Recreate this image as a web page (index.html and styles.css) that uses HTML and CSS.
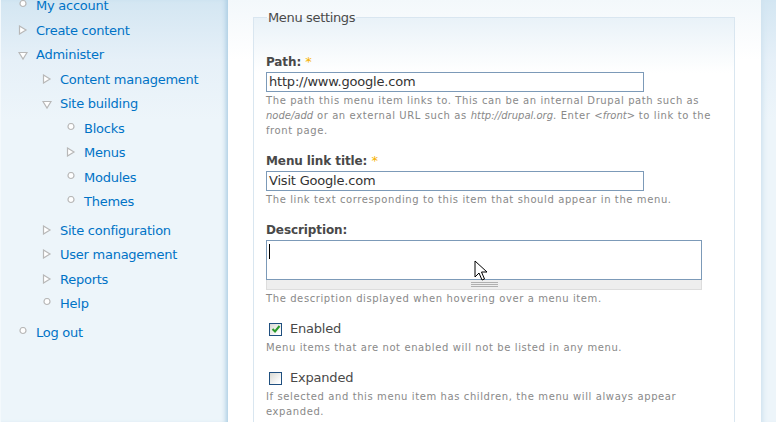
FILE: index.html
```html
<!DOCTYPE html>
<html lang="en">
<head>
    <meta charset="UTF-8">
    <title>Menu settings</title>
    <link rel="stylesheet" href="styles.css">
</head>
<body>
    <div class="sidebar">
        <ul class="menu">
            <li class="leaf"><a href="#">My account</a></li>
            <li class="collapsed"><a href="#">Create content</a></li>
            <li class="expanded"><a href="#">Administer</a>
                <ul class="menu">
                    <li class="collapsed"><a href="#">Content management</a></li>
                    <li class="expanded"><a href="#">Site building</a>
                        <ul class="menu">
                            <li class="leaf"><a href="#">Blocks</a></li>
                            <li class="collapsed"><a href="#">Menus</a></li>
                            <li class="leaf"><a href="#">Modules</a></li>
                            <li class="leaf"><a href="#">Themes</a></li>
                        </ul>
                    </li>
                    <li class="collapsed"><a href="#">Site configuration</a></li>
                    <li class="collapsed"><a href="#">User management</a></li>
                    <li class="collapsed"><a href="#">Reports</a></li>
                    <li class="leaf"><a href="#">Help</a></li>
                </ul>
            </li>
            <li class="leaf"><a href="#">Log out</a></li>
        </ul>
    </div>

    <div class="main">
        <fieldset class="settings">
            <legend>Menu settings</legend>

            <div class="form-item">
                <label>Path: <span class="required">*</span></label>
                <div class="text-field">http://www.google.com</div>
                <div class="description">The path this menu item links to. This can be an internal Drupal path such as <em>node/add</em> or an external URL such as <em>http://drupal.org</em>. Enter <em>&lt;front&gt;</em> to link to the front page.</div>
            </div>

            <div class="form-item">
                <label>Menu link title: <span class="required">*</span></label>
                <div class="text-field">Visit Google.com</div>
                <div class="description">The link text corresponding to this item that should appear in the menu.</div>
            </div>

            <div class="form-item">
                <label>Description:</label>
                <div class="textarea-wrap">
                    <div class="textarea"><span class="caret"></span></div>
                    <div class="grippie"></div>
                    <svg class="cursor" width="14" height="22" viewBox="0 0 14 22">
                        <path d="M1 1 L1 17 L5 13 L8 20 L10.5 19 L7.5 12 L13 12 Z" fill="#fff" stroke="#000" stroke-width="1"/>
                    </svg>
                </div>
                <div class="description">The description displayed when hovering over a menu item.</div>
            </div>

            <div class="form-item checkbox">
                <div class="check-row">
                    <span class="box checked">
                        <svg width="10" height="10" viewBox="0 0 10 10"><path d="M1.5 5 L4 7.5 L8.5 2" fill="none" stroke="#2a9a2a" stroke-width="2"/></svg>
                    </span>
                    <span class="check-label">Enabled</span>
                </div>
                <div class="description">Menu items that are not enabled will not be listed in any menu.</div>
            </div>

            <div class="form-item checkbox">
                <div class="check-row">
                    <span class="box"></span>
                    <span class="check-label">Expanded</span>
                </div>
                <div class="description">If selected and this menu item has children, the menu will always appear expanded.</div>
            </div>
        </fieldset>
    </div>

    <div class="right-edge"></div>
</body>
</html>
```

FILE: styles.css
```css
body, html {
    margin: 0;
    height: 100%;
    overflow: hidden;
}
body {
    display: flex;
    font-family: "DejaVu Sans", Verdana, sans-serif;
    background-color: #edf5fa;
}
.sidebar {
    width: 227px;
    flex-shrink: 0;
    border-left: 1px solid #f4f9fc;
    background: linear-gradient(to bottom, #d3e6f2 0px, #e6f0f8 60px, #edf5fa 120px);
    box-shadow: inset -5px 0 5px -3px #a9cce2;
}
.menu {
    list-style: none;
    margin: 0;
    padding: 0 0 0 24px;
}
.sidebar > .menu {
    padding-left: 11px;
    margin-top: -6px;
}
.menu li {
    font-size: 13px;
    line-height: 16px;
    padding: 4px 0 4.5px 24px;
    position: relative;
}
.menu li > .menu {
    margin-top: 4.5px;
    margin-left: -24px;
}
.menu li.expanded {
    padding-bottom: 4px;
}
.menu li a {
    color: #0073c6;
    text-decoration: none;
    letter-spacing: -0.25px;
}
.menu li::before {
    content: "";
    position: absolute;
    left: 7px;
    top: 6px;
    width: 10px;
    height: 10px;
    background-repeat: no-repeat;
}
.menu li.leaf::before {
    background-image: url("data:image/svg+xml,%3Csvg xmlns='http://www.w3.org/2000/svg' width='10' height='10'%3E%3Ccircle cx='4' cy='3.5' r='3' fill='%23fff' stroke='%23b8b8b8' stroke-width='1.2'/%3E%3C/svg%3E");
}
.menu li.collapsed::before {
    background-image: url("data:image/svg+xml,%3Csvg xmlns='http://www.w3.org/2000/svg' width='10' height='10'%3E%3Cpath d='M1.5 1 L8 5 L1.5 9 Z' fill='%23fff' stroke='%23b8b8b8' stroke-width='1.2'/%3E%3C/svg%3E");
    top: 6px;
    left: 6px;
}
.menu li.expanded::before {
    background-image: url("data:image/svg+xml,%3Csvg xmlns='http://www.w3.org/2000/svg' width='10' height='10'%3E%3Cpath d='M1 1.5 L9 1.5 L5 8 Z' fill='%23fff' stroke='%23b8b8b8' stroke-width='1.2'/%3E%3C/svg%3E");
    top: 8px;
    left: 6px;
}

.main {
    width: 533px;
    flex-shrink: 0;
    background: linear-gradient(to bottom, #f3f8fb 0px, #ffffff 60px);
    padding: 10px 26px 0 25px;
    box-sizing: border-box;
}
.settings {
    margin: 0;
    padding: 29px 12px 0 12px;
    border: 1px solid #d9e6f0;
    border-bottom: none;
    background: linear-gradient(to bottom, #e9f2f8 0px, #ffffff 55px);
    height: 500px;
}
.settings legend {
    font-size: 13px;
    color: #4a4a4a;
    padding: 0 1px;
    margin-left: 1px;
    letter-spacing: -0.35px;
}
.form-item {
    margin-bottom: 15px;
}
.form-item label {
    display: block;
    font-size: 12px;
    font-weight: bold;
    color: #494949;
    line-height: 16px;
    margin-bottom: 2px;
    letter-spacing: -0.1px;
}
.required {
    color: #f6b100;
    font-weight: normal;
    font-size: 13px;
}
.text-field {
    width: 374px;
    height: 18px;
    border: 1px solid #7c9ab8;
    font-size: 13px;
    line-height: 18px;
    color: #333;
    padding-left: 2px;
    background: #fff;
    letter-spacing: -0.2px;
}
.description {
    font-size: 10px;
    line-height: 15px;
    color: #898989;
    margin-top: 1px;
    letter-spacing: 0.6px;
}
.description em {
    font-style: italic;
    letter-spacing: 0;
}
.textarea-wrap {
    position: relative;
    width: 436px;
}
.textarea {
    height: 38px;
    border: 1px solid #7c9ab8;
    background: #fff;
}
.caret {
    display: block;
    width: 1px;
    height: 15px;
    background: #000;
    margin: 3px 0 0 2px;
}
.grippie {
    height: 9px;
    background: #eeeeee;
    border: 1px solid #dddddd;
    border-top: none;
    position: relative;
}
.grippie::after {
    content: "";
    position: absolute;
    left: 204px;
    top: 2px;
    width: 27px;
    height: 5px;
    border-top: 1px solid #b0b0b0;
    border-bottom: 1px solid #b0b0b0;
    background: linear-gradient(to bottom, transparent 1px, #b0b0b0 1px, #b0b0b0 2px, transparent 2px);
    box-sizing: border-box;
}
.cursor {
    position: absolute;
    left: 208px;
    top: 20px;
}
.checkbox {
    margin-top: 15px;
    margin-bottom: 15px;
}
.check-row {
    display: flex;
    align-items: center;
    gap: 8px;
    padding-left: 3px;
    margin-bottom: 3px;
}
.box {
    width: 11px;
    height: 11px;
    border: 1px solid #1f4f7f;
    background: linear-gradient(135deg, #d9d9d3 0%, #ffffff 85%);
    display: flex;
    align-items: center;
    justify-content: center;
}
.check-label {
    font-size: 13px;
    color: #494949;
    line-height: 16px;
    letter-spacing: -0.2px;
}
.right-edge {
    flex: 1;
    background: linear-gradient(to bottom, #d3e6f2 0px, #e6f0f8 60px, #edf5fa 120px);
    box-shadow: inset 5px 0 5px -3px #cfe2ef;
}
```
